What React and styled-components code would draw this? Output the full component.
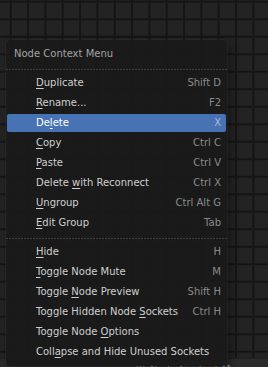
import React from "react";
import styled, { createGlobalStyle } from "styled-components";

const Global = createGlobalStyle`
  html, body { margin: 0; padding: 0; width: 268px; height: 367px; overflow: hidden; background: #232323; }
  * { box-sizing: border-box; }
`;

const Page = styled.div`
  width: 268px;
  height: 367px;
  display: flex;
  flex-direction: column;
  font-family: "DejaVu Sans", "Liberation Sans", sans-serif;
  font-size: 10px;
  overflow: hidden;
`;

const Canvas = styled.div`
  position: relative;
  height: 358px;
  flex: none;
  background-color: #232323;
  background-image:
    linear-gradient(to right, #151515 2px, transparent 2px),
    linear-gradient(to bottom, #151515 2px, transparent 2px);
  background-size: 17.33px 17.5px;
  background-position: 9.8px 0.8px;
`;

const StatusBar = styled.div`
  flex: none;
  height: 22px;
  background: #2b2b2b;
  display: flex;
  align-items: center;
  padding-left: 136px;
  gap: 5px;
  color: #a8a8a8;
  border-top: 1px solid #1f1f1f;
`;

const Menu = styled.div`
  position: absolute;
  left: 6px;
  top: 40px;
  width: 221px;
  padding: 4px 0;
  display: flex;
  flex-direction: column;
  background: rgba(26, 26, 26, 0.97);
  border-radius: 4px;
  box-shadow: 0 0 0 1px rgba(255, 255, 255, 0.04), 3px 3px 10px rgba(0, 0, 0, 0.45);
  z-index: 2;
`;

const Title = styled.div`
  height: 20px;
  line-height: 20px;
  padding-left: 8px;
  color: #a3a3a3;
  white-space: nowrap;
`;

const Separator = styled.div`
  flex: none;
  height: 1px;
  margin: 5px 0 3px;
  background-image: repeating-linear-gradient(to right, #3e3e3e 0 2px, transparent 2px 3px);
`;

const Item = styled.div`
  flex: none;
  height: 18px;
  margin: 1px 1px;
  padding: 0 5px 0 29px;
  display: flex;
  align-items: center;
  justify-content: space-between;
  white-space: nowrap;
  border-radius: 2px;
  background: ${(p) => (p.$active ? "#4772b3" : "transparent")};
  color: ${(p) => (p.$active ? "#ffffff" : "#cfcfcf")};
`;

const Label = styled.span`
  line-height: 18px;
`;

const Key = styled.u`
  text-decoration: underline;
  text-underline-offset: 2px;
  text-decoration-thickness: 1px;
`;

const Shortcut = styled.span`
  line-height: 18px;
  color: ${(p) => (p.$active ? "#a9bcdc" : "#8a8a8a")};
`;

const StatusText = styled.span`
  white-space: nowrap;
`;

const items = [
  ["", "D", "uplicate", "Shift D"],
  ["", "R", "ename...", "F2"],
  ["De", "l", "ete", "X", true],
  ["", "C", "opy", "Ctrl C"],
  ["", "P", "aste", "Ctrl V"],
  ["Delete ", "w", "ith Reconnect", "Ctrl X"],
  ["", "U", "ngroup", "Ctrl Alt G"],
  ["", "E", "dit Group", "Tab"],
  "sep",
  ["", "H", "ide", "H"],
  ["", "T", "oggle Node Mute", "M"],
  ["Toggle ", "N", "ode Preview", "Shift H"],
  ["Toggle Hidden Node ", "S", "ockets", "Ctrl H"],
  ["Toggle Node ", "O", "ptions", ""],
  ["Coll", "a", "pse and Hide Unused Sockets", ""],
];

function MouseIcon() {
  return (
    <svg width="9" height="12" viewBox="0 0 9 12" fill="none">
      <rect x="0.5" y="0.5" width="8" height="11" rx="4" stroke="#a8a8a8" />
      <path d="M4.5 1v4" stroke="#a8a8a8" />
    </svg>
  );
}

export default function App() {
  return (
    <>
      <Global />
      <Page>
        <Canvas>
          <Menu>
            <Title>Node Context Menu</Title>
            <Separator />
            {items.map((it, i) =>
              it === "sep" ? (
                <Separator key={i} />
              ) : (
                <Item key={i} $active={it[4]}>
                  <Label>
                    {it[0]}
                    <Key>{it[1]}</Key>
                    {it[2]}
                  </Label>
                  <Shortcut $active={it[4]}>{it[3]}</Shortcut>
                </Item>
              )
            )}
          </Menu>
        </Canvas>
        <StatusBar>
          <MouseIcon />
          <StatusText>Node Context Menu</StatusText>
        </StatusBar>
      </Page>
    </>
  );
}
